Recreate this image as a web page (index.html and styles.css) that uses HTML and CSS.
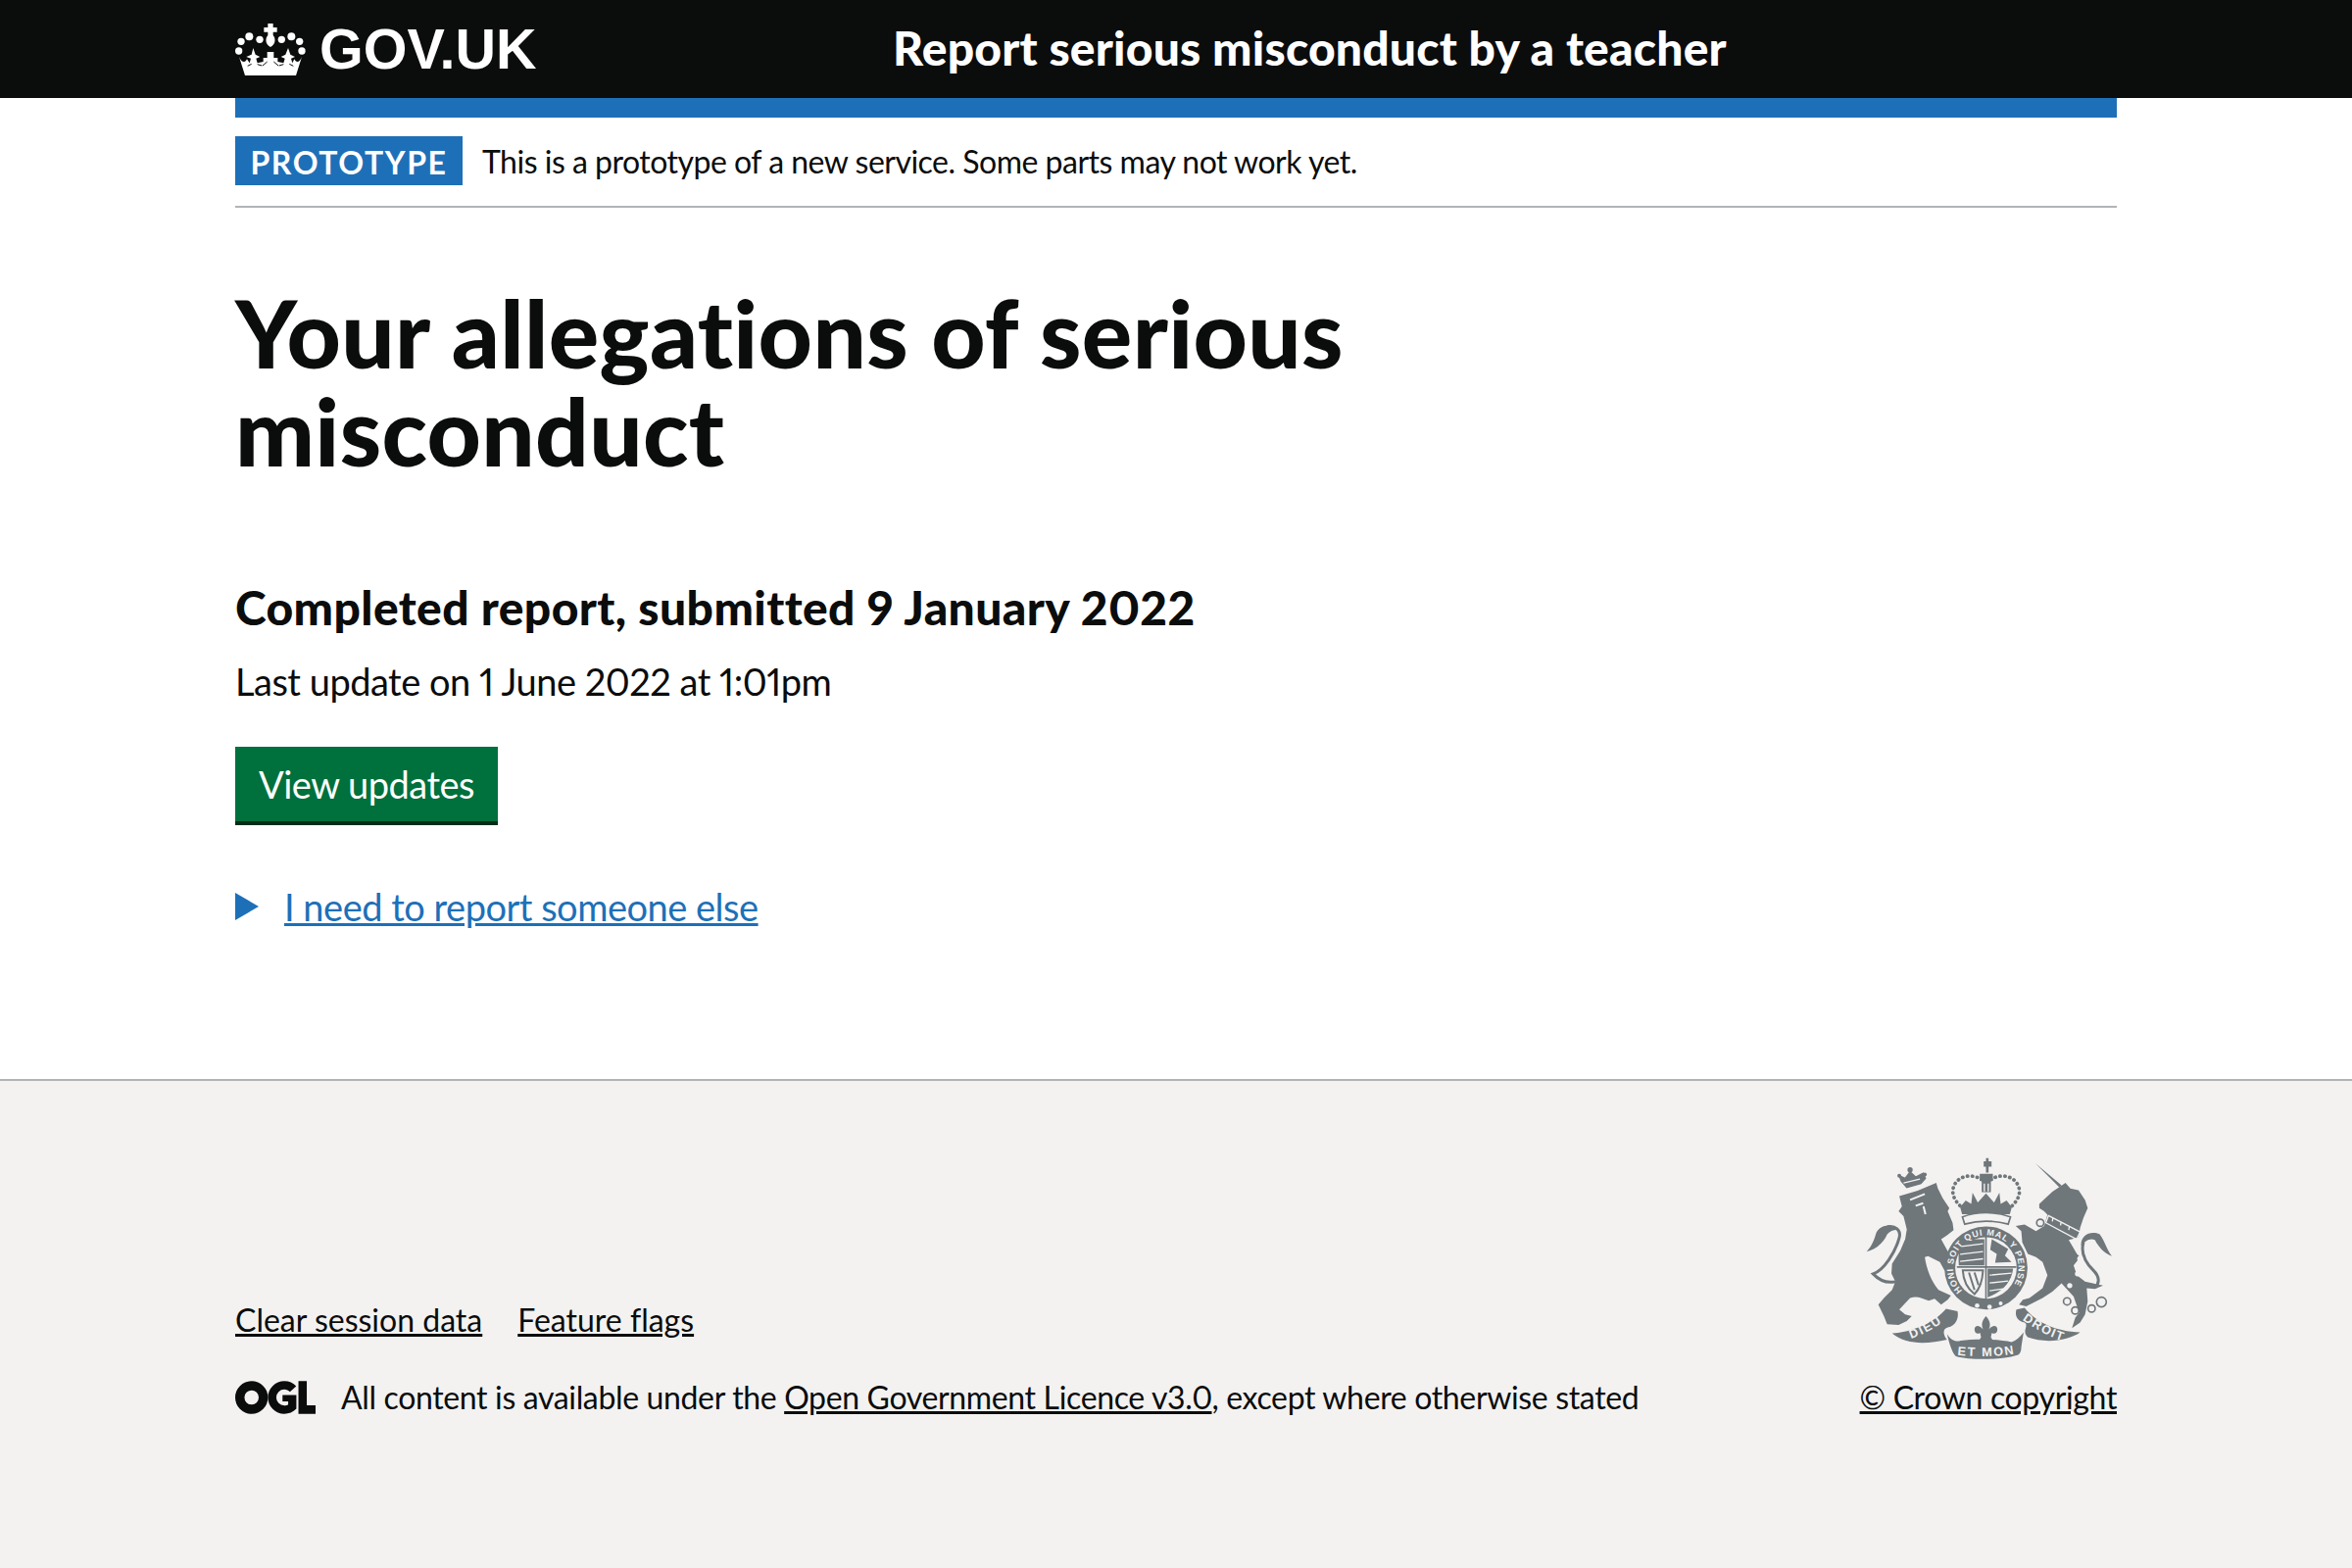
FILE: index.html
```html
<!DOCTYPE html>
<html lang="en">
<head>
    <meta charset="UTF-8">
    <meta name="viewport" content="width=device-width, initial-scale=1.0">
    <title>Your allegations of serious misconduct</title>
    <link rel="stylesheet" href="styles.css">
</head>
<body>
    <header class="site-header">
        <div class="container header-inner">
            <a class="logo" href="#">
                <svg class="logo-crown" viewBox="60 60 216 162" aria-hidden="true">
                    <path d="M160 63h16v12h12v14h-12v10c8 8 9 28-8 36-17-8-16-28-8-36V89h-12V75h12z"/>
                    <circle cx="103" cy="103" r="12"/><circle cx="135" cy="112" r="11"/><circle cx="202" cy="112" r="11"/><circle cx="232" cy="103" r="12"/>
                    <circle cx="78" cy="118" r="11"/><circle cx="257" cy="118" r="11"/><circle cx="71" cy="147" r="11"/><circle cx="264" cy="147" r="11"/>
                    <path d="M72 165C80 185 92 182 96 172L104 184 108 170 94 165 110 158 115 138 122 158 136 165 124 170 128 184 146 180 146 168 158 168 158 150H178V168L190 168 190 180 208 184 212 170 200 165 214 158 222 138 229 158 243 165 231 170 235 184 241 172C246 182 256 185 264 165L246 222H90Z"/>
                    <path class="logo-cut" d="M98 193 110 187M128 188 142 192M158 180 144 192M178 180 192 192M208 188 194 192M238 193 226 187"/>
                </svg>
                <span class="logo-text">GOV.UK</span>
            </a>
            <a class="service-name" href="#">Report serious misconduct by a teacher</a>
        </div>
    </header>

    <div class="container">
        <div class="blue-bar"></div>
        <div class="phase-banner">
            <strong class="tag">PROTOTYPE</strong>
            <span>This is a prototype of a new service. Some parts may not work yet.</span>
        </div>

        <main class="main">
            <h1>Your allegations of serious misconduct</h1>
            <h2>Completed report, submitted 9 January 2022</h2>
            <p>Last update on 1 June 2022 at 1:01pm</p>
            <a class="button" href="#">View updates</a>
            <details class="details">
                <summary><span class="summary-text">I need to report someone else</span></summary>
            </details>
        </main>
    </div>

    <footer class="footer">
        <div class="container footer-meta">
            <div class="footer-left">
                <ul class="footer-links">
                    <li><a href="#">Clear session data</a></li>
                    <li><a href="#">Feature flags</a></li>
                </ul>
                <div class="licence">
                    <svg class="ogl" viewBox="0 0 54 22" aria-hidden="true">
                        <path fill-rule="evenodd" d="M11 0a11 11 0 1 1 0 22a11 11 0 0 1 0-22zm0 6.200a4.800 4.800 0 1 0 0 9.600a4.800 4.800 0 0 0 0-9.600z"/>
                        <path d="M33 0c3.200 0 6 1.200 8 3.400l-4.200 3.800c-1-1-2.300-1.600-3.800-1.600a5.300 5.300 0 0 0 0 10.800c1 0 1.900-.2 2.600-.7v-2.100h-3.800V9.300h9.300v9.300C38.800 20.900 36 22 33 22a11 11 0 0 1 0-22z"/>
                        <path d="M42.500 0h5.600v16.300H54V22H42.500z"/>
                    </svg>
                    <span class="licence-text">All content is available under the <a href="#">Open Government Licence v3.0</a>, except where otherwise stated</span>
                </div>
            </div>
            <div class="copyright">
                <svg class="crest" viewBox="70 40 755 620" aria-hidden="true">
                    <!-- lion -->
                    <path d="M172 158 228 142 285 118 290 135 305 165 325 195 320 205 335 240 338 262 318 278 300 290 330 345 345 372 335 395 310 385 296 360 260 342 250 345C255 380 270 420 292 445L330 462 320 475 300 490 280 472 262 478C240 470 225 462 205 470L172 505 190 520 210 525 195 540 170 552 135 550 125 525 108 490 125 470 150 445 160 420 148 395 150 365 175 325 190 290 195 260 185 220 170 205 180 190Z"/>
                    <path class="crest-line" d="M160 420C135 425 110 415 92 396 125 385 160 330 172 285 178 262 160 247 135 252"/>
                    <path d="M172 262C150 240 110 245 100 275 95 295 85 315 72 328 100 322 125 300 135 275 145 262 160 260 172 262Z"/>
                    <path class="crest-cut" d="M205 170 250 152M222 188 245 180M246 190 252 214"/>
                    <path class="crest-thin" d="M178 112 172 96 190 104 205 84 222 100 245 88 252 104 238 120 195 132Z"/>
                    <path class="crest-cut thin" d="M185 118 235 106"/>
                    <circle cx="172" cy="96" r="6"/><circle cx="205" cy="78" r="8"/><circle cx="250" cy="92" r="6"/>
                    <!-- unicorn -->
                    <path d="M588 58 668 125 662 132Z"/>
                    <path d="M600 182 640 145 665 128 680 118 695 135 720 140 740 170 748 195 735 225 725 255 720 285 690 292 715 335 725 345 705 370 715 400 740 420 795 432 770 442 745 440 748 480 740 520 725 545 700 562 710 530 722 515 705 465 668 425 640 450 610 470 560 495 538 490 550 475 570 470 610 440 625 400 610 360 590 345 565 335 548 300 545 265 528 250 555 245 590 265 615 250 625 215 615 205 600 195Z"/>
                    <path class="crest-line" d="M735 300C725 335 745 365 765 385 785 405 785 425 770 438"/>
                    <path d="M728 310C725 280 755 262 785 275 800 295 805 320 822 342 795 332 780 310 770 292 755 285 740 295 728 310Z"/>
                    <path class="crest-cut thin" d="M628 218 725 268 714 290 620 240ZM640 236 642 224M665 248 667 236M690 262 692 250"/>
                    <circle class="crest-chain" cx="603" cy="240" r="11"/><circle class="crest-chain" cx="592" cy="326" r="11"/>
                    <circle class="crest-chain" cx="685" cy="480" r="11"/><circle class="crest-chain" cx="710" cy="508" r="11"/><circle class="crest-chain" cx="760" cy="502" r="11"/><circle class="crest-chain" cx="790" cy="482" r="15"/>
                    <circle class="crest-hole" cx="717" cy="396" r="8"/><circle class="crest-hole" cx="693" cy="432" r="8"/><circle class="crest-hole" cx="725" cy="350" r="9"/>
                    <!-- crown -->
                    <path d="M427 52h7V42h8v10h9v16h-9v18h-8V68h-7z" transform="translate(3 0)"/>
                    <path d="M418 90h40v22h-6v34h-28v-34h-6z"/>
                    <path class="crest-cut thin" d="M432 120v24M444 120v24"/>
                    <path class="crest-dots" d="M424 108C395 88 350 95 338 130 330 155 345 175 358 188M452 108C480 88 525 95 537 130 545 155 530 175 517 188"/>
                    <path d="M358 192 375 172 392 182 396 148 412 178 437 150 462 178 478 148 482 182 500 172 516 192 510 214H364Z"/>
                    <path class="crest-ring" d="M365 222C410 205 465 205 512 222L505 244C460 232 415 232 372 244Z"/>
                    <!-- garter and shield -->
                    <circle cx="437" cy="378" r="127"/>
                    <circle class="crest-hole" cx="437" cy="378" r="94"/>
                    <path class="crest-quarter" d="M358 290H432V370H354C352 340 354 315 358 290Z"/>
                    <path class="crest-quarter" d="M442 380H520C515 420 490 450 442 468Z"/>
                    <path class="crest-cut thin" d="M362 312 428 304M358 336 428 328M358 358 428 350M448 400 515 394M448 424 505 418M448 448 490 442"/>
                    <path d="M455 290 505 320 495 340 515 360 465 362 470 335 450 322Z"/>
                    <path class="crest-harp" d="M366 385H428C426 420 415 445 402 458 385 445 368 420 366 385ZM385 392 402 445M402 392 414 430"/>
                    <path class="crest-split" d="M437 272V478M348 375H530"/>
                    <path id="garter" fill="none" d="M365 448A100 100 0 1 1 510 446"/>
                    <text class="crest-text small"><textPath href="#garter">HONI SOIT QUI MAL Y PENSE</textPath></text>
                    <circle class="crest-hole" cx="410" cy="493" r="7"/><circle class="crest-hole" cx="448" cy="497" r="7"/><circle class="crest-hole" cx="482" cy="486" r="6"/>
                    <!-- motto ribbon -->
                    <path d="M150 578C210 575 280 545 315 503L350 510C355 530 345 555 320 560 300 565 310 590 318 597 260 610 195 615 150 578Z"/>
                    <path d="M318 580C330 600 345 605 360 600 400 595 480 595 515 605 530 600 540 590 552 575L545 620C545 635 540 645 530 645 480 660 390 660 345 648 335 640 325 610 318 580Z"/>
                    <path d="M530 505 555 500C590 545 650 572 725 575 690 600 620 610 565 590 545 570 570 555 555 545 530 540 525 520 530 505Z"/>
                    <path id="ribbon-left" fill="none" d="M208 594C250 580 292 556 326 526"/>
                    <path id="ribbon-mid" fill="none" d="M350 644C400 650 480 650 525 640"/>
                    <path id="ribbon-right" fill="none" d="M548 536C590 566 630 589 672 601"/>
                    <text class="crest-text"><textPath href="#ribbon-left">DIEU</textPath></text>
                    <text class="crest-text"><textPath href="#ribbon-mid">ET MON</textPath></text>
                    <text class="crest-text"><textPath href="#ribbon-right">DROIT</textPath></text>
                    <path d="M437 525C450 540 452 552 446 566 456 552 472 552 472 566 472 578 462 582 455 576L452 590 460 603H414L422 590 419 576C412 582 402 578 402 566 402 552 418 552 428 566 422 552 424 540 437 525Z"/>
                </svg>
                <a class="crown-link" href="#">© Crown copyright</a>
            </div>
        </div>
    </footer>
</body>
</html>
```

FILE: styles.css
```css
* {
    box-sizing: border-box;
}
html, body {
    height: 100%;
}
body {
    margin: 0;
    display: flex;
    flex-direction: column;
    font-family: Lato, "Noto Sans", sans-serif;
    font-size: 38px;
    font-variant-ligatures: none;
    font-variant-numeric: proportional-nums;
    color: #0b0c0c;
    background-color: #ffffff;
}
a {
    color: inherit;
}
.container {
    width: 1920px;
    margin: 0 auto;
}

/* header */
.site-header {
    height: 100px;
    background-color: #0b0c0c;
    color: #ffffff;
}
.header-inner {
    display: flex;
    align-items: center;
    height: 100px;
}
.logo {
    display: flex;
    align-items: center;
    width: 671px;
    color: #ffffff;
    text-decoration: none;
}
.logo-crown {
    width: 72px;
    height: 54px;
    margin-right: 14px;
    fill: #ffffff;
}
.logo-cut {
    fill: none;
    stroke: #0b0c0c;
    stroke-width: 3;
}
.logo-text {
    font-family: "Liberation Sans", Arial, sans-serif;
    font-weight: bold;
    font-size: 57.5px;
    line-height: 100px;
}
.service-name {
    margin-bottom: 4px;
    font-weight: 900;
    font-size: 48px;
    letter-spacing: 0.2px;
    color: #ffffff;
    text-decoration: none;
}
.blue-bar {
    height: 20px;
    background-color: #1d70b8;
}

/* phase banner */
.phase-banner {
    display: flex;
    align-items: center;
    height: 92px;
    padding-bottom: 2px;
    border-bottom: 2px solid #b1b4b6;
    font-size: 32px;
    letter-spacing: -0.5px;
}
.tag {
    width: 232px;
    height: 50px;
    margin-right: 20px;
    background-color: #1d70b8;
    color: #ffffff;
    font-size: 32px;
    line-height: 54px;
    text-align: center;
    letter-spacing: 1.6px;
}

/* main */
.main {
    padding-top: 77px;
    padding-bottom: 151px;
}
h1 {
    width: 1280px;
    margin: 0 0 101px;
    font-size: 96px;
    font-weight: 900;
    line-height: 100px;
    letter-spacing: 0.35px;
}
h2 {
    margin: 0 0 20px;
    font-size: 48px;
    font-weight: 900;
    line-height: 60px;
    letter-spacing: 0.4px;
}
p {
    margin: 0 0 42px;
    line-height: 50px;
    letter-spacing: -0.5px;
}
.button {
    display: inline-block;
    height: 80px;
    padding: 0 24px;
    background-color: #00703c;
    border-bottom: 4px solid #002d18;
    color: #ffffff;
    line-height: 76px;
    letter-spacing: -0.5px;
    text-decoration: none;
}
.details {
    margin-top: 58px;
    color: #1d70b8;
}
.details summary {
    display: block;
    position: relative;
    padding-left: 50px;
    line-height: 50px;
    letter-spacing: -0.5px;
    list-style: none;
}
.details summary::before {
    content: "";
    position: absolute;
    left: 0;
    top: 11px;
    border-left: 24px solid #1d70b8;
    border-top: 14px solid transparent;
    border-bottom: 14px solid transparent;
}
.summary-text {
    text-decoration: underline;
}

/* footer */
.footer {
    flex: 1;
    padding-top: 78px;
    background-color: #f3f2f1;
    border-top: 2px solid #b1b4b6;
    font-size: 32px;
}
.footer-meta {
    display: flex;
    justify-content: space-between;
    align-items: flex-end;
}
.footer-links {
    display: flex;
    gap: 36px;
    margin: 0 0 40px;
    padding: 0;
    list-style: none;
}
.licence {
    display: flex;
    align-items: center;
}
.licence-text {
    letter-spacing: -0.35px;
}
.ogl {
    width: 82px;
    height: 34px;
    margin-right: 26px;
    fill: #0b0c0c;
}
.copyright {
    display: flex;
    flex-direction: column;
    align-items: flex-end;
}
.crown-link {
    letter-spacing: -0.35px;
}
.crest {
    width: 252px;
    height: 207px;
    margin-right: 4px;
    margin-bottom: 18px;
    fill: #6f777b;
}
.crest-line {
    fill: none;
    stroke: #6f777b;
    stroke-width: 9;
}
.crest-thin {
    fill: #6f777b;
    stroke: #6f777b;
    stroke-width: 4;
}
.crest-cut {
    fill: none;
    stroke: #f3f2f1;
    stroke-width: 6;
}
.crest-cut.thin {
    stroke-width: 4;
}
.crest-dots {
    fill: none;
    stroke: #6f777b;
    stroke-width: 11;
    stroke-linecap: round;
    stroke-dasharray: 1 14;
}
.crest-chain {
    fill: none;
    stroke: #6f777b;
    stroke-width: 5;
}
.crest-hole {
    fill: #f3f2f1;
}
.crest-ring {
    fill: #f3f2f1;
    stroke: #6f777b;
    stroke-width: 5;
}
.crest-quarter {
    fill: #6f777b;
}
.crest-harp {
    fill: none;
    stroke: #6f777b;
    stroke-width: 6;
}
.crest-split {
    fill: none;
    stroke: #6f777b;
    stroke-width: 5;
}
.crest-text {
    font-family: "Liberation Sans", Arial, sans-serif;
    font-size: 38px;
    font-weight: bold;
    letter-spacing: 5px;
    fill: #f3f2f1;
}
.crest-text.small {
    font-size: 27px;
    letter-spacing: 2.5px;
}
```
